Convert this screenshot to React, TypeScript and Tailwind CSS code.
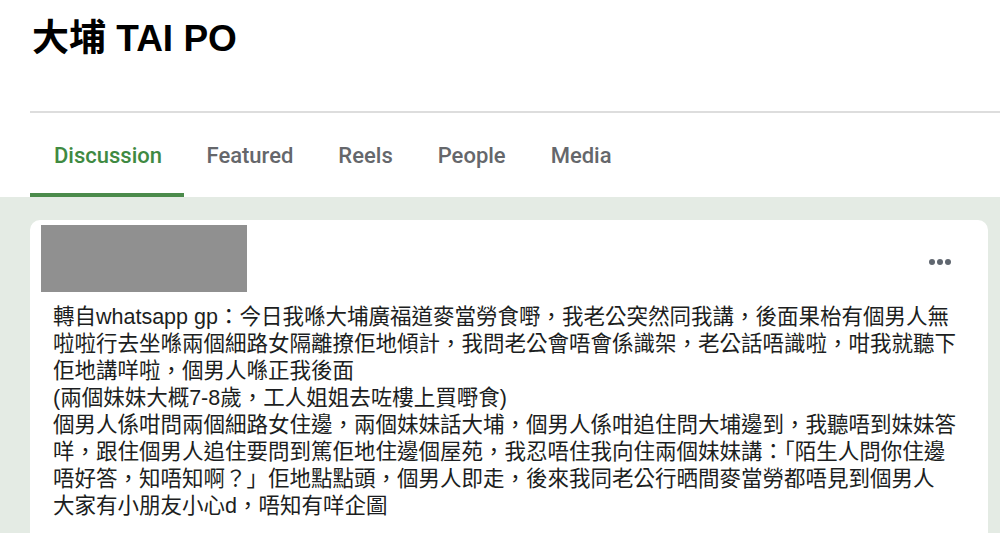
import React from "react";

const lines = [
  "轉自whatsapp gp：今日我喺大埔廣福道麥當勞食嘢，我老公突然同我講，後面果枱有個男人無",
  "啦啦行去坐喺兩個細路女隔離撩佢地傾計，我問老公會唔會係識架，老公話唔識啦，咁我就聽下",
  "佢地講咩啦，個男人喺正我後面",
  "(兩個妹妹大概7-8歲，工人姐姐去咗樓上買嘢食)",
  "個男人係咁問兩個細路女住邊，兩個妹妹話大埔，個男人係咁追住問大埔邊到，我聽唔到妹妹答",
  "咩，跟住個男人追住要問到篤佢地住邊個屋苑，我忍唔住我向住兩個妹妹講：「陌生人問你住邊",
  "唔好答，知唔知啊？」佢地點點頭，個男人即走，後來我同老公行晒間麥當勞都唔見到個男人",
  "大家有小朋友小心d，唔知有咩企圖",
];

const tabs = ["Discussion", "Featured", "Reels", "People", "Media"];

export default function App() {
  return (
    <div
      className="h-[533px] w-[1000px] overflow-hidden bg-white flex flex-col"
      style={{ fontFamily: '"Liberation Sans", "Noto Sans CJK TC", sans-serif' }}
    >
      <div className="h-[111px] shrink-0 pl-[32px] pt-[17px]">
        <h1 className="text-[37px] leading-[44px] font-bold text-black">
          大埔 TAI PO
        </h1>
      </div>
      <div className="shrink-0 ml-[30px] border-t-2 border-[#dddddd]" />
      <div className="shrink-0 ml-[30px] flex h-[84px]" style={{ fontFamily: '"Roboto", sans-serif' }}>
        {tabs.map((t, i) => (
          <div
            key={t}
            className={
              i === 0
                ? "flex items-center pl-[24px] pr-[22px] pt-[5px] border-b-4 border-[#4b8b4b] text-[22px] text-[#3f8a42] font-medium"
                : "flex items-center px-[22.5px] pt-[5px] border-b-4 border-transparent text-[22px] text-[#65676b] font-medium"
            }
          >
            {t}
          </div>
        ))}
      </div>
      <div className="flex-1 min-h-0 bg-[#e4ebe4] pt-[23px] pl-[30px] pr-[12px]">
        <div className="bg-white rounded-[10px] h-[400px] pt-[5px]">
          <div className="flex items-start pl-[11px] pr-[37px]">
            <div className="w-[206px] h-[67px] bg-[#909090]" />
            <div className="ml-auto mt-[34px] flex gap-[2px]">
              <span className="block w-[6px] h-[6px] rounded-full bg-[#606770]" />
              <span className="block w-[6px] h-[6px] rounded-full bg-[#606770]" />
              <span className="block w-[6px] h-[6px] rounded-full bg-[#606770]" />
            </div>
          </div>
          <div className="pl-[23px] pt-[12px] text-[21.5px] leading-[27px] text-[#1c1e21]">
            {lines.map((l, i) => (
              <div key={i} className="whitespace-nowrap">
                {l}
              </div>
            ))}
          </div>
        </div>
      </div>
    </div>
  );
}
